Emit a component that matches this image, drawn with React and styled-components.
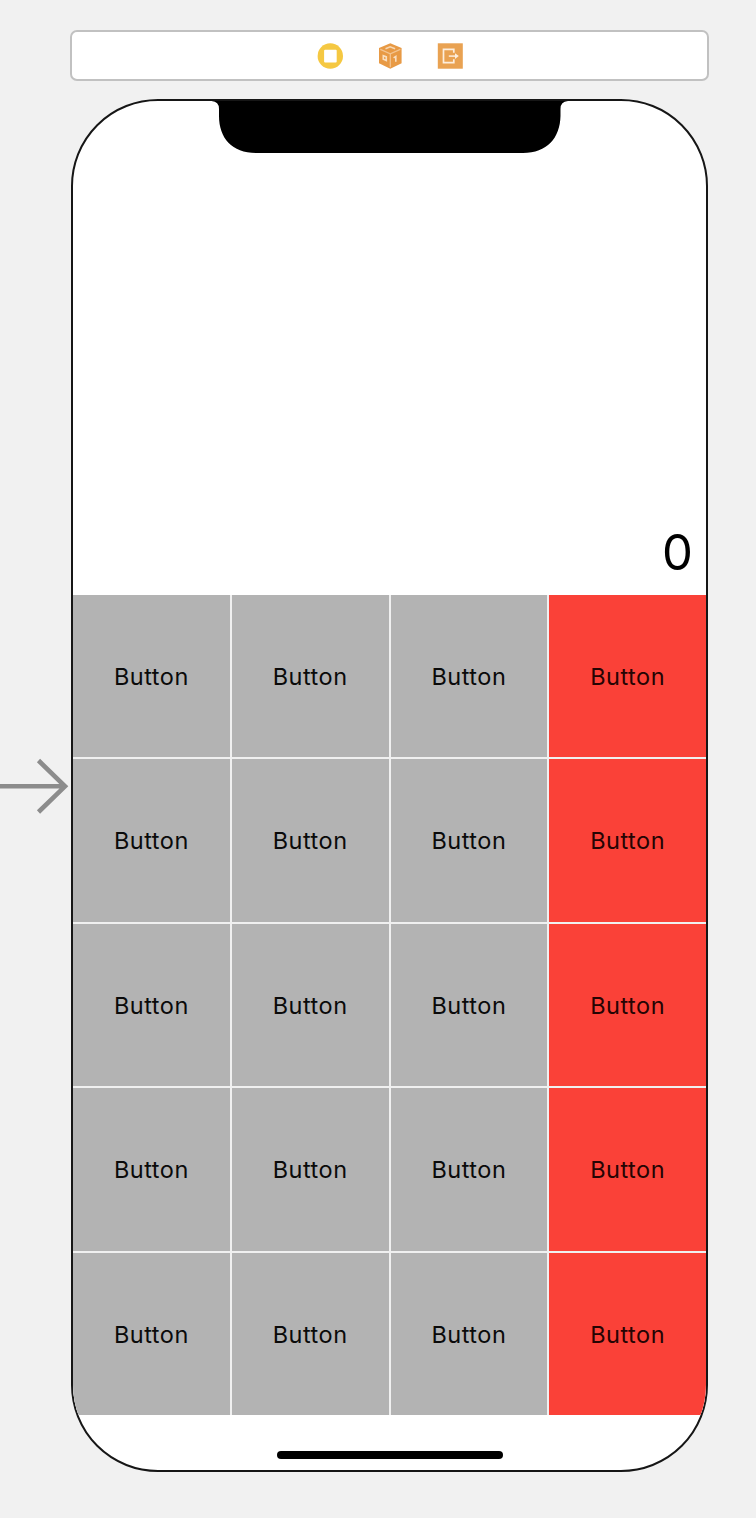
import React from "react";
import styled, { createGlobalStyle } from "styled-components";

const GlobalStyle = createGlobalStyle`
  *, *::before, *::after { box-sizing: border-box; }
  body {
    margin: 0;
    background: #f1f1f1;
    font-family: Inter, "Liberation Sans", sans-serif;
    font-optical-sizing: none;
    color: #000;
  }
`;

const Canvas = styled.main`
  position: relative;
  width: 756px;
  height: 1518px;
  padding: 30px 47px 0 70px;
  overflow: hidden;
  background: #f1f1f1;
`;

const SceneDock = styled.header`
  display: flex;
  align-items: center;
  justify-content: center;
  gap: 32px;
  width: 639px;
  height: 51px;
  padding-left: 1px;
  background: #fff;
  border: 2px solid #c1c1c1;
  border-radius: 7px;
`;

const DockIcon = styled.svg`
  display: block;
  width: 28px;
  height: 28px;
`;

const Phone = styled.section`
  position: relative;
  display: flex;
  flex-direction: column;
  width: 637px;
  height: 1373px;
  margin: 18px 0 0 1px;
  overflow: hidden;
  background: #fff;
  border: 2px solid #161616;
  border-radius: 87px;
`;

const Notch = styled.svg`
  position: absolute;
  top: -2px;
  left: 137px;
  width: 360px;
  height: 54px;
`;

const Display = styled.output`
  display: flex;
  align-items: flex-end;
  justify-content: flex-end;
  flex: none;
  height: 494px;
  padding: 0 13px 12px;
  font-size: 49px;
  line-height: 60px;
`;

const Keypad = styled.div`
  display: grid;
  flex: none;
  grid-template-columns: repeat(4, 1fr);
  grid-template-rows: repeat(5, 1fr);
  gap: 2px;
  height: 820.4px;
  background: #f0f0f0;
`;

const Key = styled.button`
  padding: 1px 0 0;
  border: 0;
  font-family: Inter, "Liberation Sans", sans-serif;
  font-size: 23.5px;
  font-weight: 400;
  letter-spacing: 0.5px;
  line-height: 30px;
  color: ${(p) => (p.$operator ? "#250403" : "#0a0a0a")};
  background: ${(p) => (p.$operator ? "#fa4138" : "#b3b3b3")};
`;

const HomeArea = styled.footer`
  display: flex;
  justify-content: center;
  flex: 1;
  padding: 35.6px 0 0 1px;
`;

const HomeIndicator = styled.div`
  width: 226px;
  height: 8.4px;
  background: #000;
  border-radius: 5px;
`;

const EntryArrow = styled.svg`
  position: absolute;
  left: 0;
  top: 756px;
  width: 70px;
  height: 60px;
`;

const keys = Array.from({ length: 20 }, (_, i) => ({
  id: i,
  operator: i % 4 === 3,
}));

function ControllerIcon() {
  return (
    <DockIcon viewBox="0 0 28 28">
      <circle cx="14.3" cy="14" r="12.7" fill="#f5c842" />
      <rect x="8.1" y="7.8" width="12.6" height="12.6" rx="1" fill="#fff" />
    </DockIcon>
  );
}

function ResponderIcon() {
  return (
    <DockIcon viewBox="-0.3 0 28 28">
      <path d="M14 1.3 25.3 6v15.3L14 26.8 2.7 21.3V6Z" fill="#e89a45" />
      <path d="m4 7.4 10 4.4 10-4.4M14 11.8v13.4" fill="none" stroke="#f3c592" strokeWidth="1.2" />
      <path d="m9.2 6.7 4.6-2 5 2" fill="none" stroke="#f7d8b4" strokeWidth="1.5" />
      <path d="M7 13.6v3.7l3 1.3v-3.7ZM17.3 15.8l2.2-1.4v5.4" fill="none" stroke="#f9dfc1" strokeWidth="1.6" />
    </DockIcon>
  );
}

function ExitIcon() {
  return (
    <DockIcon viewBox="-0.3 0 28 28">
      <rect x="1.5" y="1.3" width="25" height="25.4" fill="#e9a252" />
      <path d="M17.5 10.8V7.3H7.2v13.4h10.3v-3.5" fill="none" stroke="#fdeedd" strokeWidth="1.7" />
      <path d="M12.5 14.1h8" fill="none" stroke="#fdeedd" strokeWidth="1.5" />
      <path d="m18.7 11.3 3.8 2.8-3.8 2.8Z" fill="#fdeedd" />
    </DockIcon>
  );
}

export default function App() {
  return (
    <>
      <GlobalStyle />
      <Canvas>
        <SceneDock>
          <ControllerIcon />
          <ResponderIcon />
          <ExitIcon />
        </SceneDock>
        <Phone>
          <Notch viewBox="0 0 360 54">
            <path
              d="M0 0H360V2H358Q350.5 2.4 350.5 10V17C350 39 337 54 313 54H46C22 54 9 39 9 17V10Q9 2.4 1.5 2H0Z"
              fill="#000"
            />
          </Notch>
          <Display>0</Display>
          <Keypad>
            {keys.map((key) => (
              <Key key={key.id} $operator={key.operator}>
                Button
              </Key>
            ))}
          </Keypad>
          <HomeArea>
            <HomeIndicator />
          </HomeArea>
        </Phone>
        <EntryArrow viewBox="0 0 70 60">
          <path d="M0 30.3H65M38.5 4.5 65 30.3 38.5 56" fill="none" stroke="#8c8c8c" strokeWidth="4.6" />
        </EntryArrow>
      </Canvas>
    </>
  );
}
